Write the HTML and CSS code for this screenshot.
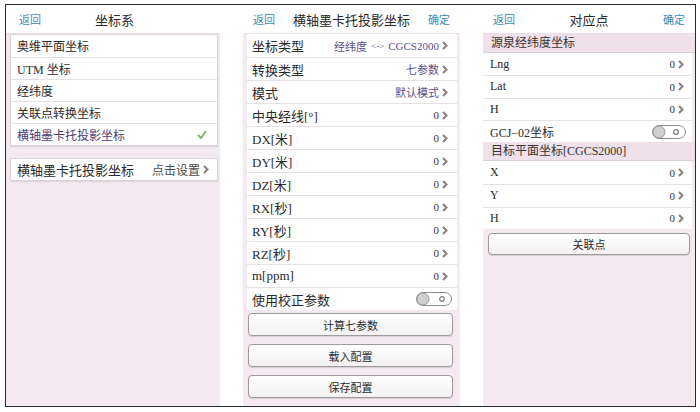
FILE: index.html
```html
<!DOCTYPE html>
<html lang="zh">
<head>
<meta charset="utf-8">
<title>坐标系</title>
<link rel="stylesheet" href="styles.css">
</head>
<body>
<div class="frame">
  <section class="panel p1">
    <header class="bar"><span class="back">返回</span><span class="title">坐标系</span><span></span></header>
    <div class="body">
      <ul class="card">
        <li class="row">奥维平面坐标</li>
        <li class="row">UTM 坐标</li>
        <li class="row">经纬度</li>
        <li class="row">关联点转换坐标</li>
        <li class="row sel"><span>横轴墨卡托投影坐标</span><svg class="check" width="10" height="9" viewBox="0 0 10 9"><path d="M1 5l3 3 5-7" fill="none" stroke="#86b26a" stroke-width="2"/></svg></li>
      </ul>
      <ul class="card card2">
        <li class="row big"><span>横轴墨卡托投影坐标</span><span class="val">点击设置<svg class="chev" width="6" height="9" viewBox="0 0 6 9"><path d="M1 1l3.5 3.5L1 8" fill="none" stroke="#8a7e78" stroke-width="2"/></svg></span></li>
      </ul>
    </div>
  </section>

  <section class="panel p2">
    <header class="bar"><span class="back">返回</span><span class="title">横轴墨卡托投影坐标</span><span class="ok">确定</span></header>
    <div class="body">
      <ul class="list">
        <li class="row"><span>坐标类型</span><span class="val purple">经纬度<span class="arrow">&lt;-&gt;</span>CGCS2000<svg class="chev" width="6" height="9" viewBox="0 0 6 9"><path d="M1 1l3.5 3.5L1 8" fill="none" stroke="#8a7e78" stroke-width="2"/></svg></span></li>
        <li class="row"><span>转换类型</span><span class="val purple">七参数<svg class="chev" width="6" height="9" viewBox="0 0 6 9"><path d="M1 1l3.5 3.5L1 8" fill="none" stroke="#8a7e78" stroke-width="2"/></svg></span></li>
        <li class="row"><span>模式</span><span class="val purple">默认模式<svg class="chev" width="6" height="9" viewBox="0 0 6 9"><path d="M1 1l3.5 3.5L1 8" fill="none" stroke="#8a7e78" stroke-width="2"/></svg></span></li>
        <li class="row"><span>中央经线[°]</span><span class="val">0<svg class="chev" width="6" height="9" viewBox="0 0 6 9"><path d="M1 1l3.5 3.5L1 8" fill="none" stroke="#8a7e78" stroke-width="2"/></svg></span></li>
        <li class="row"><span>DX[米]</span><span class="val">0<svg class="chev" width="6" height="9" viewBox="0 0 6 9"><path d="M1 1l3.5 3.5L1 8" fill="none" stroke="#8a7e78" stroke-width="2"/></svg></span></li>
        <li class="row"><span>DY[米]</span><span class="val">0<svg class="chev" width="6" height="9" viewBox="0 0 6 9"><path d="M1 1l3.5 3.5L1 8" fill="none" stroke="#8a7e78" stroke-width="2"/></svg></span></li>
        <li class="row"><span>DZ[米]</span><span class="val">0<svg class="chev" width="6" height="9" viewBox="0 0 6 9"><path d="M1 1l3.5 3.5L1 8" fill="none" stroke="#8a7e78" stroke-width="2"/></svg></span></li>
        <li class="row"><span>RX[秒]</span><span class="val">0<svg class="chev" width="6" height="9" viewBox="0 0 6 9"><path d="M1 1l3.5 3.5L1 8" fill="none" stroke="#8a7e78" stroke-width="2"/></svg></span></li>
        <li class="row"><span>RY[秒]</span><span class="val">0<svg class="chev" width="6" height="9" viewBox="0 0 6 9"><path d="M1 1l3.5 3.5L1 8" fill="none" stroke="#8a7e78" stroke-width="2"/></svg></span></li>
        <li class="row"><span>RZ[秒]</span><span class="val">0<svg class="chev" width="6" height="9" viewBox="0 0 6 9"><path d="M1 1l3.5 3.5L1 8" fill="none" stroke="#8a7e78" stroke-width="2"/></svg></span></li>
        <li class="row"><span>m[ppm]</span><span class="val">0<svg class="chev" width="6" height="9" viewBox="0 0 6 9"><path d="M1 1l3.5 3.5L1 8" fill="none" stroke="#8a7e78" stroke-width="2"/></svg></span></li>
        <li class="row"><span>使用校正参数</span><svg class="toggle" width="36" height="14" viewBox="0 0 36 14"><rect x="0.5" y="0.5" width="35" height="13" rx="6.5" fill="#fff" stroke="#8c8c8c"/><circle cx="7" cy="7" r="6" fill="#cfcfcf" stroke="#9a9a9a"/><circle cx="26" cy="7" r="2.3" fill="none" stroke="#7a7a7a" stroke-width="1.2"/></svg></li>
      </ul>
      <div class="btns">
        <button class="btn">计算七参数</button>
        <button class="btn">载入配置</button>
        <button class="btn">保存配置</button>
      </div>
    </div>
  </section>

  <section class="panel p3">
    <header class="bar"><span class="back">返回</span><span class="title">对应点</span><span class="ok">确定</span></header>
    <div class="body">
      <div class="sect">源泉经纬度坐标</div>
      <ul class="list">
        <li class="row"><span>Lng</span><span class="val">0<svg class="chev" width="6" height="9" viewBox="0 0 6 9"><path d="M1 1l3.5 3.5L1 8" fill="none" stroke="#8a7e78" stroke-width="2"/></svg></span></li>
        <li class="row"><span>Lat</span><span class="val">0<svg class="chev" width="6" height="9" viewBox="0 0 6 9"><path d="M1 1l3.5 3.5L1 8" fill="none" stroke="#8a7e78" stroke-width="2"/></svg></span></li>
        <li class="row"><span>H</span><span class="val">0<svg class="chev" width="6" height="9" viewBox="0 0 6 9"><path d="M1 1l3.5 3.5L1 8" fill="none" stroke="#8a7e78" stroke-width="2"/></svg></span></li>
        <li class="row"><span>GCJ−02坐标</span><svg class="toggle" width="34" height="14" viewBox="0 0 34 14"><rect x="0.5" y="0.5" width="33" height="13" rx="6.5" fill="#fff" stroke="#8c8c8c"/><circle cx="7" cy="7" r="6" fill="#cfcfcf" stroke="#9a9a9a"/><circle cx="24" cy="7" r="2.3" fill="none" stroke="#7a7a7a" stroke-width="1.2"/></svg></li>
      </ul>
      <div class="sect">目标平面坐标[CGCS2000]</div>
      <ul class="list">
        <li class="row tall"><span>X</span><span class="val">0<svg class="chev" width="6" height="9" viewBox="0 0 6 9"><path d="M1 1l3.5 3.5L1 8" fill="none" stroke="#8a7e78" stroke-width="2"/></svg></span></li>
        <li class="row tall"><span>Y</span><span class="val">0<svg class="chev" width="6" height="9" viewBox="0 0 6 9"><path d="M1 1l3.5 3.5L1 8" fill="none" stroke="#8a7e78" stroke-width="2"/></svg></span></li>
        <li class="row tall"><span>H</span><span class="val">0<svg class="chev" width="6" height="9" viewBox="0 0 6 9"><path d="M1 1l3.5 3.5L1 8" fill="none" stroke="#8a7e78" stroke-width="2"/></svg></span></li>
      </ul>
      <button class="btn">关联点</button>
    </div>
  </section>
</div>
</body>
</html>
```

FILE: styles.css
```css
* { box-sizing: border-box; }
html, body { margin: 0; padding: 0; background: #fff; }
body {
  font-family: "Liberation Serif", "Noto Sans CJK SC", serif;
  color: #2a2a2a;
}
ul { list-style: none; margin: 0; padding: 0; }

.frame {
  margin: 4px 0 0 5px;
  width: 691px;
  height: 403px;
  border: 1px solid #2b2b2b;
  display: flex;
  column-gap: 23px;
}

.panel {
  display: flex;
  flex-direction: column;
}
.p1 { width: 214px; }
.p2 { width: 217px; }
.p3 { width: 212px; }

.bar {
  height: 28px;
  display: grid;
  grid-template-columns: 1fr auto 1fr;
  align-items: center;
  padding: 0 10px;
  background: #fff;
}
.p1 .bar { padding-left: 13px; }
.back, .ok { font-size: 11px; color: #3a8cb6; }
.ok { justify-self: end; }
.title { font-size: 13px; color: #2a2a2a; }

.body {
  flex: 1;
  background: #f4e9f0;
  border-top: 1px solid #ecdde6;
}

/* panel 1 */
.card {
  margin: 0 2px 0 4px;
  background: #fff;
  border: 1px solid #ddd3da;
  box-shadow: 0 1px 1px rgba(120, 90, 110, 0.15);
}
.card .row {
  height: 22px;
  padding: 0 8px 0 6px;
  font-size: 12px;
}
.card2 { margin-top: 12px; }
.card .row.big { height: 21px; font-size: 13px; }
.row.sel { color: #4b3d78; }
.check { margin-right: 2px; }

.row {
  display: flex;
  align-items: center;
  justify-content: space-between;
  border-top: 1px solid #e4e0e3;
  white-space: nowrap;
}
.row:first-child { border-top: none; }

.val {
  display: flex;
  align-items: center;
  gap: 3px;
  font-size: 11px;
  color: #333;
}
.val.purple { color: #5e5088; }
.arrow { font-size: 9px; margin: 0 1px; }
.card .val { font-size: 12px; color: #4a4a4a; }
.chev { flex: none; }

/* panel 2 */
.p2 .list {
  margin: 0 3px 0 4px;
  background: #fff;
}
.p2 .row {
  height: 23px;
  padding: 0 9px 0 5px;
  font-size: 13px;
}
.p2 .row .toggle { margin-right: -4px; }
.btns {
  display: flex;
  flex-direction: column;
  gap: 8px;
  margin: 3px 7px 0 5px;
}
.btn {
  display: block;
  width: 100%;
  height: 23px;
  border: 1px solid #9b9b9b;
  border-radius: 4px;
  background: linear-gradient(#ffffff, #f3f1f2);
  box-shadow: 0 1px 1px rgba(0, 0, 0, 0.12);
  font-family: "Liberation Serif", "Noto Sans CJK SC", serif;
  font-size: 11px;
  color: #2a2a2a;
  padding: 0;
}

/* panel 3 */
.sect {
  height: 19px;
  line-height: 19px;
  padding-left: 8px;
  font-size: 12px;
  color: #333;
  background: #efe0ea;
  border-bottom: 1px solid #dccdd6;
}
.p3 .list {
  background: #fff;
  margin: 0 3px 0 0;
}
.p3 .row {
  height: 22.3px;
  padding: 0 8px 0 7px;
  font-size: 12px;
}
.p3 .row.tall { height: 22.7px; }
.p3 .row .toggle { margin-right: -2px; }
.p3 .btn {
  margin: 4px 5px 0 5px;
  height: 22px;
  width: calc(100% - 10px);
}
```
